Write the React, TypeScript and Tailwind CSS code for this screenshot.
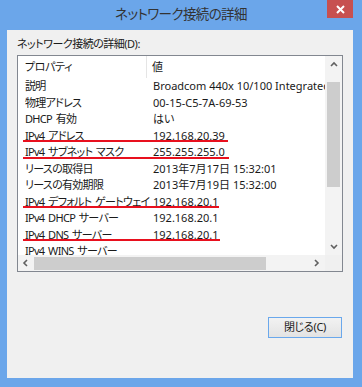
const rows: { name: string; value: string; line?: string }[] = [
  { name: "説明", value: "Broadcom 440x 10/100 Integrated Controller" },
  { name: "物理アドレス", value: "00-15-C5-7A-69-53" },
  { name: "DHCP 有効", value: "はい" },
  { name: "IPv4 アドレス", value: "192.168.20.39", line: "w-[205px]" },
  { name: "IPv4 サブネット マスク", value: "255.255.255.0", line: "w-[206px]" },
  { name: "リースの取得日", value: "2013年7月17日 15:32:01" },
  { name: "リースの有効期限", value: "2013年7月19日 15:32:00" },
  { name: "IPv4 デフォルト ゲートウェイ", value: "192.168.20.1", line: "w-[196px]" },
  { name: "IPv4 DHCP サーバー", value: "192.168.20.1" },
  { name: "IPv4 DNS サーバー", value: "192.168.20.1", line: "w-[197px]" },
  { name: "IPv4 WINS サーバー", value: "" },
];

function Chevron({ dir }: { dir: "up" | "down" | "left" | "right" }) {
  const d = {
    up: "M1 5 L4 2 L7 5",
    down: "M1 2 L4 5 L7 2",
    left: "M5 1 L2 4 L5 7",
    right: "M2 1 L5 4 L2 7",
  }[dir];
  return (
    <svg width="8" height="8" viewBox="0 0 8 8">
      <path d={d} fill="none" stroke="#606060" strokeWidth="1.6" />
    </svg>
  );
}

export default function App() {
  return (
    <div className="flex h-[387px] w-[362px] flex-col bg-[#6ba6ea] font-['Noto_Sans','Noto_Sans_CJK_JP',sans-serif] text-[11px] text-[#1a1a1a] [font-feature-settings:'palt']">
      <div className="relative flex h-[30px] shrink-0 items-center justify-center">
        <span className="text-[13.5px] leading-none tracking-[-0.6px] text-[#333]">ネットワーク接続の詳細</span>
        <div className="absolute right-[9px] top-0 flex h-[18px] w-[26px] items-center justify-center bg-[#c75050]">
          <svg width="9" height="9" viewBox="0 0 9 9">
            <path d="M1 1 L8 8 M8 1 L1 8" stroke="#fff" strokeWidth="2" />
          </svg>
        </div>
      </div>

      <div className="ml-[7px] mr-[9px] h-[348px] bg-[#f0f0f0] px-[10px] pt-[6px]">
        <div className="mb-[3px] h-[16px] leading-[16px] tracking-[-0.5px]">ネットワーク接続の詳細(D):</div>

        <div className="flex h-[217px] w-[326px] flex-col border border-[#828790] bg-white">
          <div className="flex h-[199px]">
            <div className="w-[307px] overflow-hidden">
              <div className="grid h-[22px] grid-cols-[129px_1fr] items-center">
                <div className="h-full border-r border-[#e5e5e5] pl-[7px] leading-[22px] tracking-[-0.4px]">プロパティ</div>
                <div className="pl-[5px]">値</div>
              </div>
              {rows.map((r) => (
                <div key={r.name} className="relative grid h-[16.5px] grid-cols-[129px_1fr] leading-[16.5px]">
                  <div className="whitespace-nowrap pl-[7px] tracking-[-0.7px] [word-spacing:1.5px]">{r.name}</div>
                  <div className="overflow-hidden whitespace-nowrap pl-[6px]">{r.value}</div>
                  {r.line ? (
                    <div className={`absolute left-[5px] top-[12.5px] h-[2px] bg-[#e8101e] ${r.line}`} />
                  ) : null}
                </div>
              ))}
            </div>
            <div className="flex w-[17px] flex-col bg-[#f3f3f3]">
              <div className="flex h-[17px] items-center justify-center">
                <Chevron dir="up" />
              </div>
              <div className="mx-[2px] mt-[9px] h-[105px] bg-[#cdcdcd]" />
              <div className="flex-1" />
              <div className="flex h-[17px] items-center justify-center">
                <Chevron dir="down" />
              </div>
            </div>
          </div>
          <div className="flex h-[16px] bg-[#f3f3f3]">
            <div className="flex w-[16px] items-center justify-center">
              <Chevron dir="left" />
            </div>
            <div className="flex w-[275px] items-center">
              <div className="h-[13px] w-[232px] bg-[#cdcdcd]" />
            </div>
            <div className="flex w-[16px] items-center justify-center">
              <Chevron dir="right" />
            </div>
            <div className="w-[17px] bg-[#f0f0f0]" />
          </div>
        </div>

        <div className="mr-[1px] mt-[45px] flex justify-end">
          <div className="flex h-[21px] w-[74px] items-center justify-center border border-[#6aa8ec] bg-gradient-to-b from-[#f2f2f2] to-[#e3e3e3] tracking-[-0.3px]">
            閉じる(C)
          </div>
        </div>
      </div>
    </div>
  );
}
